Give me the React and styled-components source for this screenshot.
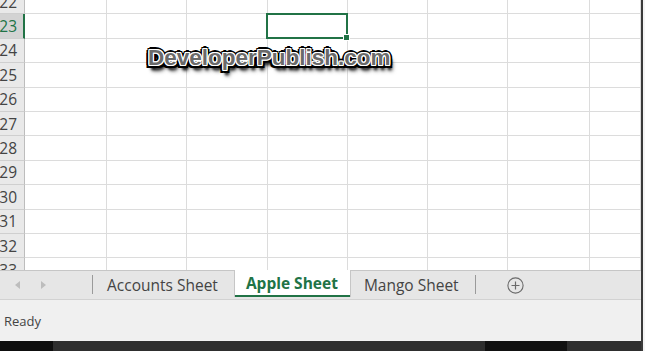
import React from "react";
import styled, { createGlobalStyle } from "styled-components";

const Global = createGlobalStyle`
  html, body { margin: 0; padding: 0; background: #f4f4f4; overflow: hidden; }
  #root { width: 645px; height: 351px; }
`;

const Frame = styled.div`
  width: 641px;
  height: 351px;
  display: flex;
  flex-direction: column;
  border-right: 2px solid #3a3a3a;
  background: #fff;
  font-family: "Open Sans", "Noto Sans", sans-serif;
  position: relative;
  overflow: hidden;
`;

const Sheet = styled.div`
  height: 270px;
  overflow: hidden;
  position: relative;
  flex: none;
`;

const Grid = styled.div`
  margin-top: -10px;
  display: grid;
  grid-template-columns: 25px 82px 80px 81px 80px 80px 80px 82px 1fr;
  grid-auto-rows: 24.4px;
`;

const RowHead = styled.div`
  background: ${(p) => (p.$active ? "#d3d3d3" : "#e9e9e9")};
  color: ${(p) => (p.$active ? "#217346" : "#444")};
  border-bottom: 1px solid #cfcfcf;
  border-right: ${(p) => (p.$active ? "2px solid #217346" : "1px solid #bdbdbd")};
  box-sizing: border-box;
  font-size: 15.5px;
  display: flex;
  align-items: center;
  justify-content: flex-end;
  padding-right: ${(p) => (p.$active ? "6px" : "7px")};
  overflow: hidden;
  white-space: nowrap;
`;

const Cell = styled.div`
  border-right: 1px solid #dcdcdc;
  border-bottom: 1px solid #dcdcdc;
  box-sizing: border-box;
  position: relative;
`;

const Selection = styled.div`
  position: absolute;
  left: -2px;
  top: -1px;
  right: -1px;
  bottom: -1px;
  border: 2px solid #217346;
  z-index: 2;
`;

const Handle = styled.div`
  position: absolute;
  right: -4px;
  bottom: -4px;
  width: 5px;
  height: 5px;
  background: #217346;
  border: 1px solid #fff;
`;

const Watermark = styled.div`
  position: absolute;
  left: 148px;
  top: 45px;
  font-family: "Liberation Sans", Arial, sans-serif;
  font-weight: bold;
  font-size: 22.5px;
  color: #6a6a6a;
  z-index: 3;
  text-shadow:
    1px 0 0 #fff, -1px 0 0 #fff, 0 1px 0 #fff, 0 -1px 0 #fff,
    1px 1px 0 #fff, -1px -1px 0 #fff, 1px -1px 0 #fff, -1px 1px 0 #fff,
    2px 0 0 #000, -2px 0 0 #000, 0 2px 0 #000, 0 -2px 0 #000,
    2px 2px 0 #000, -2px -2px 0 #000, 2px -2px 0 #000, -2px 2px 0 #000,
    3px 0 0 #000, -3px 0 0 #000, 0 3px 0 #000, 0 -3px 0 #000,
    3px 3px 0 #000, -3px 3px 0 #000,
    2px 5px 3px #000, 3px 6px 4px rgba(0,0,0,0.6);
`;

const TabBar = styled.div`
  height: 30px;
  flex: none;
  background: #e6e6e6;
  border-top: 1px solid #c6c6c6;
  border-bottom: 1px solid #d2d2d2;
  box-sizing: border-box;
  display: flex;
  align-items: stretch;
`;

const Nav = styled.div`
  width: 92px;
  display: flex;
  align-items: center;
  padding-left: 15px;
  gap: 21px;
  box-sizing: border-box;
`;

const Arrow = styled.div`
  width: 0;
  height: 0;
  border-top: 4px solid transparent;
  border-bottom: 4px solid transparent;
  ${(p) =>
    p.$dir === "left"
      ? "border-right: 5px solid #bdbdbd;"
      : "border-left: 5px solid #bdbdbd;"}
`;

const Sep = styled.div`
  width: 1px;
  background: #9a9a9a;
  margin: 4px 0 5px;
`;

const Tab = styled.div`
  display: flex;
  align-items: center;
  justify-content: center;
  padding: 0 ${(p) => p.$pr ?? 14}px 1px ${(p) => p.$pl ?? 14}px;
  font-size: 15.5px;
  color: ${(p) => (p.$active ? "#217346" : "#444")};
  font-weight: ${(p) => (p.$active ? 700 : 400)};
  background: ${(p) => (p.$active ? "#fff" : "transparent")};
  margin-top: ${(p) => (p.$active ? "-1px" : "0")};
  margin-bottom: ${(p) => (p.$active ? "2px" : "0")};
  border-left: ${(p) => (p.$active ? "1px solid #c6c6c6" : "none")};
  border-right: ${(p) => (p.$active ? "1px solid #c6c6c6" : "none")};
  box-shadow: ${(p) => (p.$active ? "inset 0 -2px 0 #217346" : "none")};
  white-space: nowrap;
`;

const AddBtn = styled.div`
  display: flex;
  align-items: center;
  padding-left: 31px;
  color: #666;
`;

const Status = styled.div`
  height: 41px;
  flex: none;
  background: #f0f0f0;
  display: flex;
  align-items: center;
  padding-left: 4px;
  font-size: 13px;
  color: #444;
`;

const Taskbar = styled.div`
  flex: 1;
  display: flex;
  background: #2e2e2e;
`;

const TaskSeg = styled.div`
  width: ${(p) => p.$w}px;
  background: ${(p) => p.$c};
`;

const rows = [22, 23, 24, 25, 26, 27, 28, 29, 30, 31, 32, 33];
const cols = 8;

export default function App() {
  return (
    <>
      <Global />
      <Frame>
        <Sheet>
          <Grid>
            {rows.map((r) => (
              <React.Fragment key={r}>
                <RowHead $active={r === 23}>{r}</RowHead>
                {Array.from({ length: cols }).map((_, c) => (
                  <Cell key={c}>
                    {r === 23 && c === 3 && (
                      <Selection>
                        <Handle />
                      </Selection>
                    )}
                  </Cell>
                ))}
              </React.Fragment>
            ))}
          </Grid>
          <Watermark>DeveloperPublish.com</Watermark>
        </Sheet>
        <TabBar>
          <Nav>
            <Arrow $dir="left" />
            <Arrow $dir="right" />
          </Nav>
          <Sep />
          <Tab $pl={14} $pr={16}>Accounts Sheet</Tab>
          <Tab $active $pl={11} $pr={12}>Apple Sheet</Tab>
          <Tab $pl={13} $pr={16}>Mango Sheet</Tab>
          <Sep />
          <AddBtn>
            <svg width="17" height="17" viewBox="0 0 17 17">
              <circle cx="8.5" cy="8.5" r="7.6" fill="none" stroke="#6a6a6a" strokeWidth="1.1" />
              <path d="M8.5 4.5v8M4.5 8.5h8" stroke="#6a6a6a" strokeWidth="1.2" />
            </svg>
          </AddBtn>
        </TabBar>
        <Status>Ready</Status>
        <Taskbar>
          <TaskSeg $w={53} $c="#0e0e0e" />
          <TaskSeg $w={432} $c="#2e2e2e" />
          <TaskSeg $w={82} $c="#111" />
        </Taskbar>
      </Frame>
    </>
  );
}
